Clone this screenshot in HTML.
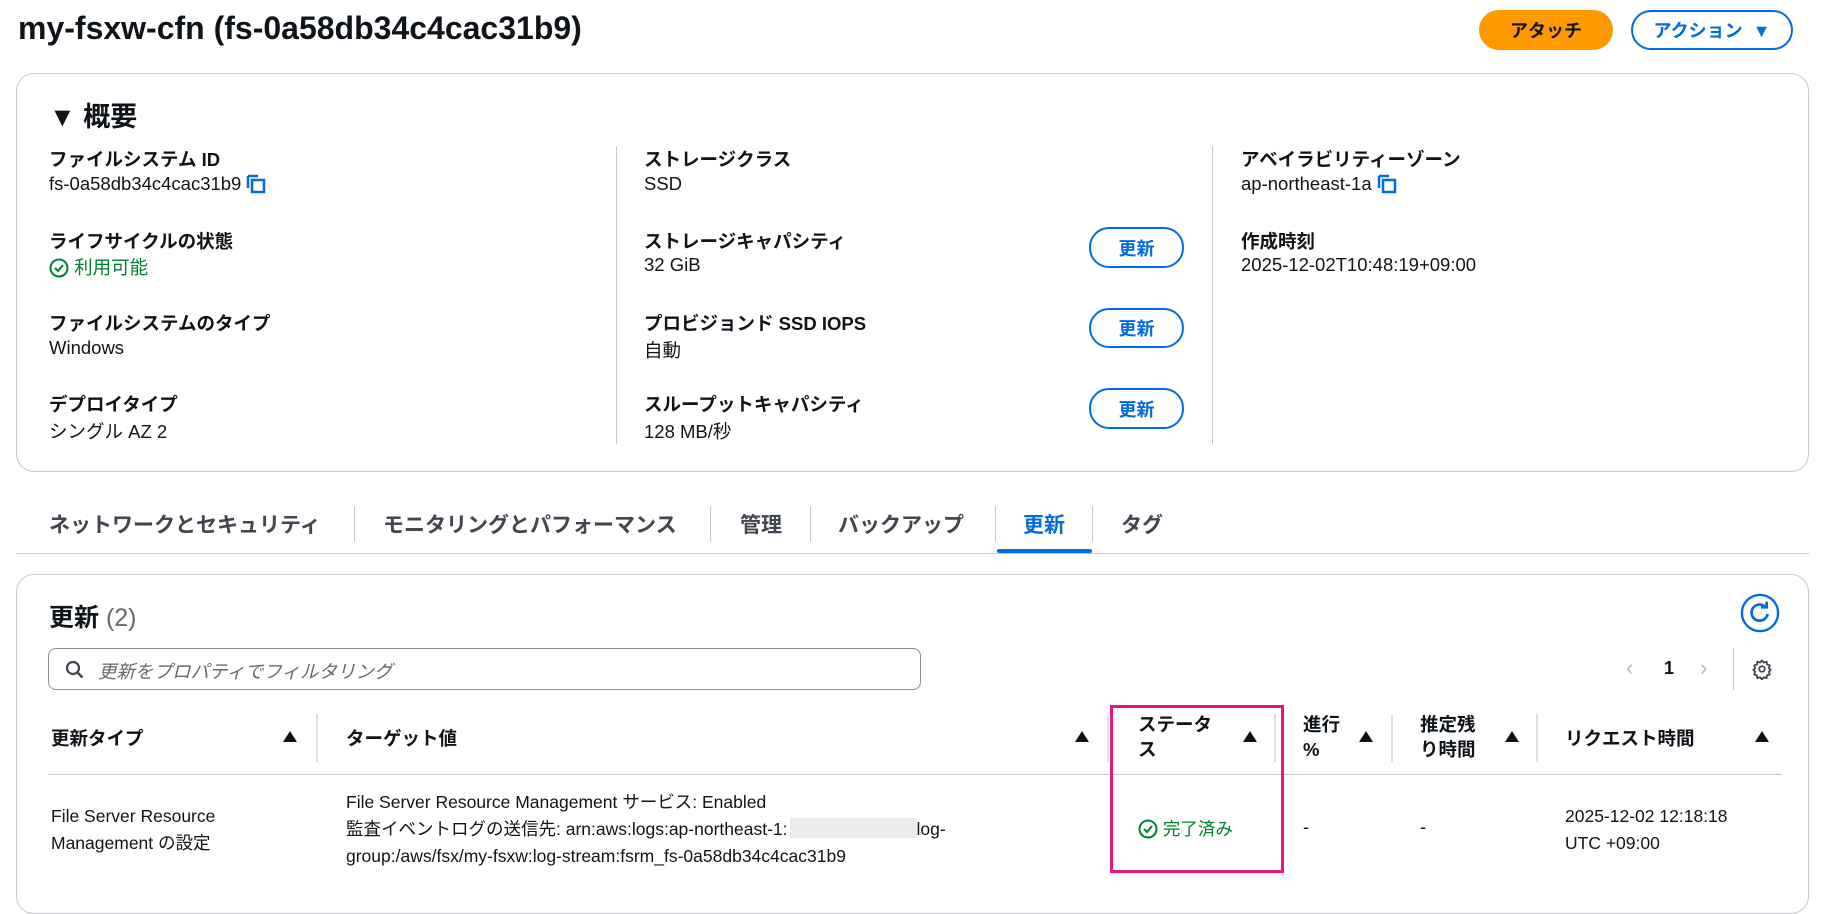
<!DOCTYPE html>
<html><head><meta charset="utf-8"><style>
*{margin:0;padding:0;box-sizing:border-box}
body{width:1822px;height:880px;overflow:hidden;background:#fff;font-family:"Liberation Sans","Noto Sans CJK JP",sans-serif;color:#0f141a;font-size:18.5px;position:relative}
.a{position:absolute;white-space:nowrap}
.b{font-weight:700}
.card{position:absolute;border:1px solid #c6c6cd;border-radius:18px;background:#fff}
.btn{position:absolute;border:2px solid #006ce0;border-radius:20px;color:#006ce0;font-weight:700;font-size:18px;display:flex;align-items:center;justify-content:center;background:#fff}
.vd{position:absolute;width:1px;background:#c6c6cd}
.sort{position:absolute;width:0;height:0;border-left:7px solid transparent;border-right:7px solid transparent;border-bottom:11px solid #0f141a}
.g{color:#00802f}
.t{font-size:17.5px}
</style></head><body>
<div class="a b" style="left:18px;top:10px;font-size:32px">my-fsxw-cfn (fs-0a58db34c4cac31b9)</div>
<div class="btn" style="left:1479px;top:10px;width:134px;height:40px;background:#ff9900;border-color:#ff9900;color:#0f141a">アタッチ</div>
<div class="btn" style="left:1631px;top:10px;width:162px;height:40px">アクション&nbsp;&nbsp;▼</div>

<div class="card" style="left:16px;top:73px;width:1793px;height:399px"></div>
<div class="a b" style="left:49px;top:95px;font-size:27px">▼&nbsp;概要</div>
<div class="vd" style="left:616px;top:146px;height:298px"></div>
<div class="vd" style="left:1212px;top:146px;height:298px"></div>

<div class="a b" style="left:49px;top:146px">ファイルシステム ID</div>
<div class="a" style="left:49px;top:173px">fs-0a58db34c4cac31b9 <svg width="20" height="20" viewBox="0 0 20 20" style="vertical-align:-4px"><path d="M2 2h10M2 2v12" stroke="#006ce0" stroke-width="2.5" fill="none"/><rect x="6" y="6" width="12" height="12" stroke="#006ce0" stroke-width="2.5" fill="none"/></svg></div>
<div class="a b" style="left:49px;top:228px">ライフサイクルの状態</div>
<div class="a g" style="left:49px;top:254px"><svg width="20" height="20" viewBox="0 0 20 20" style="vertical-align:-4px"><circle cx="10" cy="10" r="8.5" stroke="#00802f" stroke-width="2" fill="none"/><path d="M6 10l3 3 5-6" stroke="#00802f" stroke-width="2" fill="none"/></svg>&nbsp;利用可能</div>
<div class="a b" style="left:49px;top:310px">ファイルシステムのタイプ</div>
<div class="a" style="left:49px;top:337px">Windows</div>
<div class="a b" style="left:49px;top:391px">デプロイタイプ</div>
<div class="a" style="left:49px;top:418px">シングル AZ 2</div>

<div class="a b" style="left:644px;top:146px">ストレージクラス</div>
<div class="a" style="left:644px;top:173px">SSD</div>
<div class="a b" style="left:644px;top:228px">ストレージキャパシティ</div>
<div class="a" style="left:644px;top:254px">32 GiB</div>
<div class="a b" style="left:644px;top:310px">プロビジョンド SSD IOPS</div>
<div class="a" style="left:644px;top:337px">自動</div>
<div class="a b" style="left:644px;top:391px">スループットキャパシティ</div>
<div class="a" style="left:644px;top:418px">128 MB/秒</div>
<div class="btn" style="left:1089px;top:227px;width:95px;height:41px">更新</div>
<div class="btn" style="left:1089px;top:308px;width:95px;height:40px">更新</div>
<div class="btn" style="left:1089px;top:388px;width:95px;height:41px">更新</div>

<div class="a b" style="left:1241px;top:146px">アベイラビリティーゾーン</div>
<div class="a" style="left:1241px;top:173px">ap-northeast-1a <svg width="20" height="20" viewBox="0 0 20 20" style="vertical-align:-4px"><path d="M2 2h10M2 2v12" stroke="#006ce0" stroke-width="2.5" fill="none"/><rect x="6" y="6" width="12" height="12" stroke="#006ce0" stroke-width="2.5" fill="none"/></svg></div>
<div class="a b" style="left:1241px;top:228px">作成時刻</div>
<div class="a" style="left:1241px;top:254px">2025-12-02T10:48:19+09:00</div>

<!-- tabs -->
<div style="position:absolute;left:16px;top:553px;width:1793px;height:1px;background:#c6c6cd"></div>
<div class="a b" style="left:49px;top:509px;font-size:21px;color:#424650">ネットワークとセキュリティ</div>
<div class="vd" style="left:354px;top:506px;height:36px"></div>
<div class="a b" style="left:383px;top:509px;font-size:21px;color:#424650">モニタリングとパフォーマンス</div>
<div class="vd" style="left:710px;top:506px;height:36px"></div>
<div class="a b" style="left:740px;top:509px;font-size:21px;color:#424650">管理</div>
<div class="vd" style="left:810px;top:506px;height:36px"></div>
<div class="a b" style="left:838px;top:509px;font-size:21px;color:#424650">バックアップ</div>
<div class="vd" style="left:995px;top:506px;height:36px"></div>
<div class="a b" style="left:1023px;top:509px;font-size:21px;color:#006ce0">更新</div>
<div style="position:absolute;left:997px;top:549px;width:95px;height:4px;background:#006ce0;border-radius:2px"></div>
<div class="vd" style="left:1092px;top:506px;height:36px"></div>
<div class="a b" style="left:1121px;top:509px;font-size:21px;color:#424650">タグ</div>

<div class="card" style="left:16px;top:574px;width:1793px;height:340px"></div>
<div class="a b" style="left:49px;top:598px;font-size:25px">更新 <span style="font-weight:400;color:#656871">(2)</span></div>
<svg class="a" style="left:1740px;top:593px" width="40" height="40" viewBox="0 0 42 42"><circle cx="21" cy="21" r="19" stroke="#006ce0" stroke-width="2.5" fill="none"/><path d="M27 15a8.5 8.5 0 1 0 2 7" stroke="#006ce0" stroke-width="2.8" fill="none"/><path d="M22 15h6v-6" stroke="#006ce0" stroke-width="2.8" fill="none"/></svg>
<div style="position:absolute;left:48px;top:648px;width:873px;height:42px;border:1px solid #8c8c94;border-radius:8px"></div>
<svg class="a" style="left:65px;top:660px" width="20" height="20" viewBox="0 0 20 20"><circle cx="8" cy="8" r="6" stroke="#424650" stroke-width="2.2" fill="none"/><path d="M12.5 12.5l5 5" stroke="#424650" stroke-width="2.4"/></svg>
<div class="a" style="left:98px;top:658px;font-style:italic;color:#656871">更新をプロパティでフィルタリング</div>
<div class="a" style="left:1626px;top:655px;font-size:22px;color:#b4b4bb">‹</div>
<div class="a b" style="left:1664px;top:658px;font-size:18px">1</div>
<div class="a" style="left:1700px;top:655px;font-size:22px;color:#b4b4bb">›</div>
<div class="vd" style="left:1733px;top:648px;height:42px"></div>
<svg class="a" style="left:1751px;top:658px" width="22" height="22" viewBox="0 0 24 24"><circle cx="12" cy="12" r="3" stroke="#424650" stroke-width="2" fill="none"/><path d="M12 2.5l2 2.5 3-1 .5 3 3 1-1 3 2 2-2 2 1 3-3 1-.5 3-3-1-2 2.5-2-2.5-3 1-.5-3-3-1 1-3-2-2 2-2-1-3 3-1 .5-3 3 1z" stroke="#424650" stroke-width="2" fill="none" stroke-linejoin="round"/></svg>

<!-- table header -->
<div class="a b" style="left:51px;top:725px">更新タイプ</div><div class="sort" style="left:283px;top:731px"></div><div class="vd" style="left:316px;top:714px;height:48px;width:2px;background:#dedee3"></div>
<div class="a b" style="left:346px;top:725px">ターゲット値</div><div class="sort" style="left:1075px;top:731px"></div><div class="vd" style="left:1107px;top:714px;height:48px;width:2px;background:#dedee3"></div>
<div class="a b" style="left:1138px;top:712px;line-height:25px">ステータ<br>ス</div><div class="sort" style="left:1243px;top:731px"></div><div class="vd" style="left:1274px;top:714px;height:48px;width:2px;background:#dedee3"></div>
<div class="a b" style="left:1303px;top:712px;line-height:25px">進行<br>%</div><div class="sort" style="left:1359px;top:731px"></div><div class="vd" style="left:1391px;top:714px;height:48px;width:2px;background:#dedee3"></div>
<div class="a b" style="left:1420px;top:712px;line-height:25px">推定残<br>り時間</div><div class="sort" style="left:1505px;top:731px"></div><div class="vd" style="left:1536px;top:714px;height:48px;width:2px;background:#dedee3"></div>
<div class="a b" style="left:1565px;top:725px">リクエスト時間</div><div class="sort" style="left:1755px;top:731px"></div>
<div style="position:absolute;left:48px;top:774px;width:1733px;height:1px;background:#c6c6cd"></div>

<div class="a t" style="left:51px;top:803px;line-height:27px">File Server Resource<br>Management の設定</div>
<div class="a t" style="left:346px;top:789px;line-height:27px">File Server Resource Management サービス: Enabled<br>監査イベントログの送信先: arn:aws:logs:ap-northeast-1:<span style="display:inline-block;width:127px;height:20px;background:#ececee;vertical-align:-3px;margin-left:2px"></span>log-<br>group:/aws/fsx/my-fsxw:log-stream:fsrm_fs-0a58db34c4cac31b9</div>
<div class="a g t" style="left:1138px;top:816px"><svg width="20" height="20" viewBox="0 0 20 20" style="vertical-align:-4px"><circle cx="10" cy="10" r="8.5" stroke="#00802f" stroke-width="2" fill="none"/><path d="M6 10l3 3 5-6" stroke="#00802f" stroke-width="2" fill="none"/></svg>&nbsp;完了済み</div>
<div class="a" style="left:1303px;top:816px">-</div>
<div class="a" style="left:1420px;top:816px">-</div>
<div class="a t" style="left:1565px;top:803px;line-height:27px">2025-12-02 12:18:18<br>UTC +09:00</div>
<div style="position:absolute;left:1110px;top:705px;width:174px;height:168px;border:3px solid #e8157a"></div>
</body></html>
